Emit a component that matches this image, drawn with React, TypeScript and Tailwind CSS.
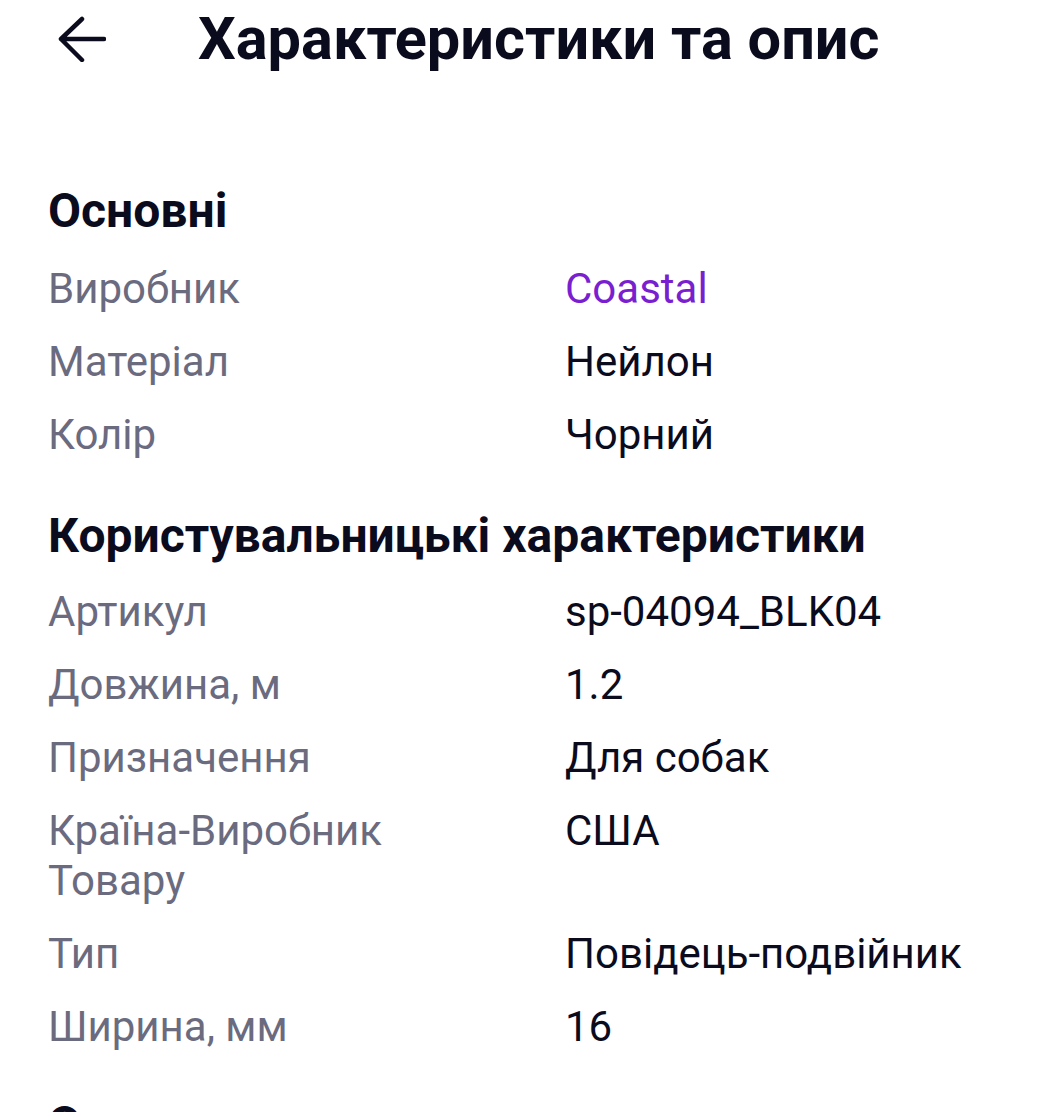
import React from "react";

const rows1 = [
  { k: "Виробник", v: "Coastal", link: true },
  { k: "Матеріал", v: "Нейлон" },
  { k: "Колір", v: "Чорний" },
];
const rows2 = [
  { k: "Артикул", v: "sp-04094_BLK04" },
  { k: "Довжина, м", v: "1.2" },
  { k: "Призначення", v: "Для собак" },
  { k: "Країна-Виробник Товару", v: "США" },
  { k: "Тип", v: "Повідець-подвійник" },
  { k: "Ширина, мм", v: "16" },
];

function Row({ k, v, link }: { k: string; v: string; link?: boolean }) {
  return (
    <div className="flex text-[42px] leading-[50px]">
      <div className="w-[517px] shrink-0 pr-[40px] text-[#6b6b7f]">{k}</div>
      <div className={link ? "text-[#7a1fd0]" : "text-[#0b0b1e]"}>{v}</div>
    </div>
  );
}

export default function App() {
  return (
    <div
      className="w-[1060px] h-[1112px] overflow-hidden bg-white"
      style={{ fontFamily: "Roboto, 'Noto Sans', sans-serif" }}
    >
      <div className="flex items-center h-[78px]">
        <div className="w-[198px] flex pl-[58px]">
          <svg width="48" height="46" viewBox="0 0 48 46" fill="none">
            <path
              d="M46 23H3M24 3L3 23L24 44"
              stroke="#0b0b1e"
              strokeWidth="4.5"
              strokeLinecap="round"
              strokeLinejoin="round"
            />
          </svg>
        </div>
        <h1 className="text-[59.5px] font-bold text-[#0b0b1e] leading-[70px]">
          Характеристики та опис
        </h1>
      </div>

      <div className="px-12 pt-[105px]">
        <h2 className="text-[48px] font-bold text-[#0b0b1e] leading-[56px] mb-[25px]">
          Основні
        </h2>
        <div className="flex flex-col gap-[23px]">
          {rows1.map((r) => (
            <Row key={r.k} {...r} />
          ))}
        </div>
        <h2 className="text-[48px] font-bold text-[#0b0b1e] leading-[56px] mt-[48px] mb-[23px]">
          Користувальницькі характеристики
        </h2>
        <div className="flex flex-col gap-[23px]">
          {rows2.map((r) => (
            <Row key={r.k} {...r} />
          ))}
        </div>
        <h2 className="text-[48px] font-bold text-[#0b0b1e] leading-[56px] mt-[44px]">
          Опис
        </h2>
      </div>
    </div>
  );
}
